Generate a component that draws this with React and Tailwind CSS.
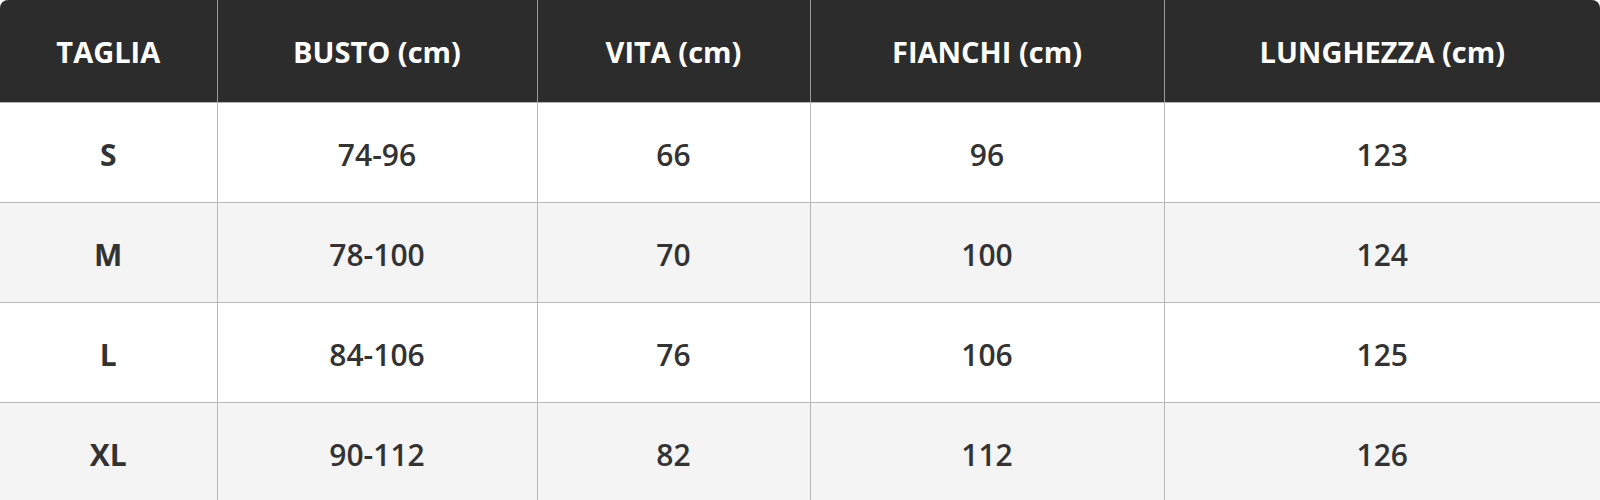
const headers = ["TAGLIA", "BUSTO (cm)", "VITA (cm)", "FIANCHI (cm)", "LUNGHEZZA (cm)"];

const rows = [
  ["S", "74-96", "66", "96", "123"],
  ["M", "78-100", "70", "100", "124"],
  ["L", "84-106", "76", "106", "125"],
  ["XL", "90-112", "82", "112", "126"],
];

const widths = ["w-[217px]", "w-[320px]", "w-[273px]", "w-[354px]", "w-[436px]"];

export default function App() {
  return (
    <div className="w-[1600px] bg-white font-['Open_Sans','Noto_Sans',sans-serif]">
      <div className="overflow-hidden rounded-t-lg">
        <table className="w-full table-fixed border-collapse text-center">
          <colgroup>
            {widths.map((w, i) => (
              <col key={i} className={w} />
            ))}
          </colgroup>
          <thead>
            <tr className="h-[102px] bg-[#2c2c2c]">
              {headers.map((h, i) => (
                <th
                  key={h}
                  className={`border-b border-[#b5b5b5] pt-[2px] text-[29px] font-bold text-white ${
                    i > 0 ? "border-l border-l-[#9a9a9a]" : ""
                  }`}
                >
                  {h}
                </th>
              ))}
            </tr>
          </thead>
          <tbody>
            {rows.map((r, ri) => (
              <tr key={r[0]} className={`h-[100px] ${ri % 2 === 1 ? "bg-[#f4f4f4]" : "bg-white"}`}>
                {r.map((c, ci) => (
                  <td
                    key={ci}
                    className={`border-b border-[#b8b8b8] pt-[4px] text-[30px] text-[#333333] ${
                      ci === 0 ? "font-bold" : "font-semibold border-l"
                    }`}
                  >
                    {c}
                  </td>
                ))}
              </tr>
            ))}
          </tbody>
        </table>
      </div>
    </div>
  );
}
